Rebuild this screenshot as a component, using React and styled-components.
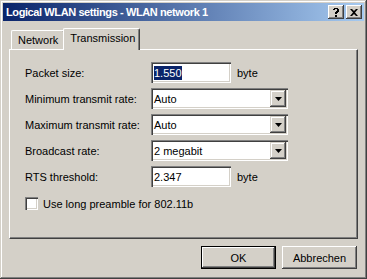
import React from "react";
import styled, { createGlobalStyle } from "styled-components";

const GlobalStyle = createGlobalStyle`
  html, body {
    margin: 0;
    padding: 0;
    background: #d4d0c8;
  }
  * {
    box-sizing: border-box;
  }
`;

const font = `"Liberation Sans", Arial, sans-serif`;

const Window = styled.div`
  width: 367px;
  height: 279px;
  background: #d4d0c8;
  font-family: ${font};
  font-size: 11px;
  color: #000;
  padding: 3px;
  display: flex;
  flex-direction: column;
  box-shadow: inset -1px -1px 0 #404040, inset 1px 1px 0 #d4d0c8,
    inset -2px -2px 0 #808080, inset 2px 2px 0 #ffffff;
`;

const TitleBar = styled.div`
  height: 18px;
  display: flex;
  align-items: center;
  padding: 0 2px 0 3px;
  background: linear-gradient(to right, #0a246a, #a6caf0);
  color: #fff;
  font-weight: bold;
  font-size: 11px;
  letter-spacing: -0.4px;
`;

const Title = styled.span`
  flex: 1;
  white-space: nowrap;
`;

const CaptionButton = styled.div`
  width: 16px;
  height: 14px;
  margin-left: ${(p) => (p.$gap ? "2px" : "0")};
  background: #d4d0c8;
  display: flex;
  align-items: center;
  justify-content: center;
  color: #000;
  box-shadow: inset -1px -1px 0 #404040, inset 1px 1px 0 #ffffff,
    inset -2px -2px 0 #808080;
`;

const Body = styled.div`
  flex: 1;
  display: flex;
  flex-direction: column;
  padding: 7px 6px 0 6px;
`;

const Tabs = styled.div`
  display: flex;
  align-items: flex-end;
  height: 21px;
  padding-left: 2px;
  position: relative;
  z-index: 1;
`;

const Tab = styled.div`
  padding: ${(p) => (p.$active ? "3px 4px 0 6px" : "3px 6px 0 6px")};
  margin: ${(p) => (p.$active ? "0 -2px -1px -2px" : "0")};
  background: #d4d0c8;
  border-top: 1px solid #fff;
  border-left: 1px solid #fff;
  border-right: 1px solid #404040;
  border-top-left-radius: 2px;
  border-top-right-radius: 2px;
  box-shadow: inset -1px 0 0 #808080;
  white-space: nowrap;
  height: ${(p) => (p.$active ? "22px" : "19px")};
  z-index: ${(p) => (p.$active ? 2 : 1)};
`;

const Panel = styled.div`
  height: 190px;
  padding: 12px 14px 0 15px;
  border-top: 1px solid #fff;
  border-left: 1px solid #fff;
  border-right: 1px solid #404040;
  border-bottom: 1px solid #404040;
  box-shadow: inset -1px -1px 0 #808080;
  display: flex;
  flex-direction: column;
`;

const Form = styled.div`
  display: grid;
  grid-template-columns: 126px auto;
  row-gap: 5px;
  align-items: center;
`;

const Label = styled.div`
  white-space: nowrap;
`;

const Field = styled.div`
  display: flex;
  align-items: center;
  gap: 6px;
`;

const Input = styled.div`
  width: ${(p) => p.$w}px;
  height: 21px;
  background: #fff;
  display: flex;
  align-items: center;
  padding-left: 3px;
  box-shadow: inset 1px 1px 0 #808080, inset 2px 2px 0 #404040,
    inset -1px -1px 0 #ffffff, inset -2px -2px 0 #d4d0c8;
`;

const Selected = styled.span`
  background: #0a246a;
  color: #fff;
  padding: 1px 0;
`;

const Combo = styled(Input)`
  justify-content: space-between;
  padding-right: 2px;
`;

const Arrow = styled.div`
  width: 16px;
  height: 17px;
  background: #d4d0c8;
  display: flex;
  align-items: center;
  justify-content: center;
  box-shadow: inset -1px -1px 0 #404040, inset 1px 1px 0 #d4d0c8,
    inset -2px -2px 0 #808080, inset 2px 2px 0 #ffffff;
`;

const CheckRow = styled.label`
  display: flex;
  align-items: center;
  gap: 5px;
  margin-top: 10px;
`;

const Box = styled.div`
  width: 13px;
  height: 13px;
  background: #fff;
  box-shadow: inset 1px 1px 0 #808080, inset 2px 2px 0 #404040,
    inset -1px -1px 0 #ffffff, inset -2px -2px 0 #d4d0c8;
`;

const Footer = styled.div`
  display: flex;
  justify-content: flex-end;
  gap: 6px;
  padding: 7px 1px 0 0;
`;

const Button = styled.div`
  width: 75px;
  height: 23px;
  display: flex;
  align-items: center;
  justify-content: center;
  background: #d4d0c8;
  box-shadow: ${(p) =>
    p.$default
      ? "inset 0 0 0 1px #000, inset -2px -2px 0 #404040, inset 2px 2px 0 #ffffff, inset -3px -3px 0 #808080"
      : "inset -1px -1px 0 #404040, inset 1px 1px 0 #ffffff, inset -2px -2px 0 #808080"};
`;

const DownArrow = () => (
  <svg width="7" height="4" viewBox="0 0 7 4">
    <path d="M0 0h7L3.5 4z" fill="#000" />
  </svg>
);

const rows = [
  { label: "Minimum transmit rate:", value: "Auto" },
  { label: "Maximum transmit rate:", value: "Auto" },
  { label: "Broadcast rate:", value: "2 megabit" },
];

export default function App() {
  return (
    <>
      <GlobalStyle />
      <Window>
        <TitleBar>
          <Title>Logical WLAN settings - WLAN network 1</Title>
          <CaptionButton>
            <svg width="8" height="9" viewBox="0 0 8 9">
              <path d="M1 1h1V0h4v1h1v3H6v1H5v1H3V4h1V3h1V1H3v1H1z M3 7h2v2H3z" fill="#000" />
            </svg>
          </CaptionButton>
          <CaptionButton $gap>
            <svg width="8" height="7" viewBox="0 0 8 7">
              <path d="M0 0h2l2 2 2-2h2L5 3.5 8 7H6L4 5 2 7H0l3-3.5z" fill="#000" />
            </svg>
          </CaptionButton>
        </TitleBar>
        <Body>
          <Tabs>
            <Tab>Network</Tab>
            <Tab $active>Transmission</Tab>
          </Tabs>
          <Panel>
            <Form>
              <Label>Packet size:</Label>
              <Field>
                <Input $w={80}>
                  <Selected>1.550</Selected>
                </Input>
                <span>byte</span>
              </Field>
              {rows.map((r) => (
                <React.Fragment key={r.label}>
                  <Label>{r.label}</Label>
                  <Combo $w={137}>
                    <span>{r.value}</span>
                    <Arrow>
                      <DownArrow />
                    </Arrow>
                  </Combo>
                </React.Fragment>
              ))}
              <Label>RTS threshold:</Label>
              <Field>
                <Input $w={80}>2.347</Input>
                <span>byte</span>
              </Field>
            </Form>
            <CheckRow>
              <Box />
              <span>Use long preamble for 802.11b</span>
            </CheckRow>
          </Panel>
          <Footer>
            <Button $default>OK</Button>
            <Button>Abbrechen</Button>
          </Footer>
        </Body>
      </Window>
    </>
  );
}
